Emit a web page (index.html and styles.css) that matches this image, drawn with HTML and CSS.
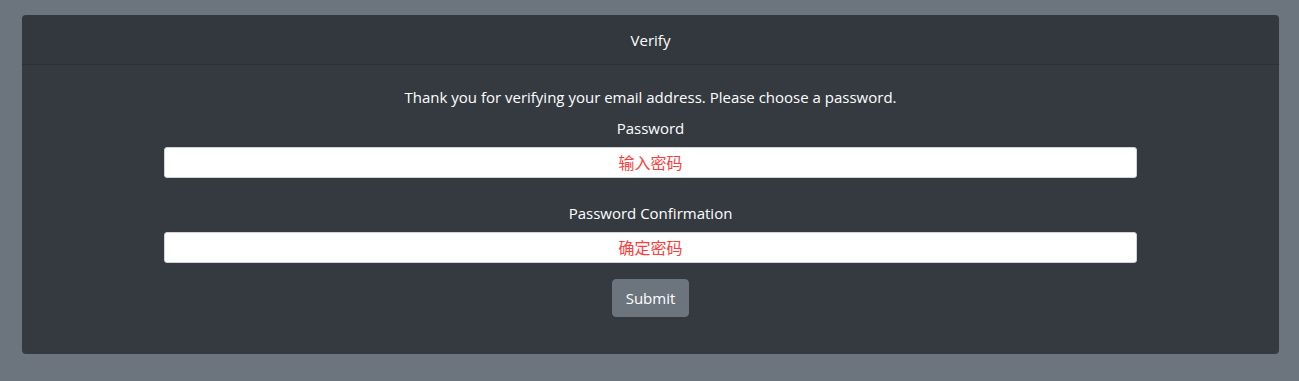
FILE: index.html
```html
<!DOCTYPE html>
<html lang="en">
<head>
<meta charset="utf-8">
<title>Verify</title>
<link rel="stylesheet" href="styles.css">
</head>
<body>
<div class="card">
  <div class="card-header">Verify</div>
  <form class="card-body">
    <p class="intro">Thank you for verifying your email address. Please choose a password.</p>
    <div class="form-group">
      <label class="label" for="pw">Password</label>
      <input class="input" id="pw" type="password" placeholder="输入密码">
    </div>
    <div class="form-group">
      <label class="label" for="pwc">Password Confirmation</label>
      <input class="input" id="pwc" type="password" placeholder="确定密码">
    </div>
    <button class="btn" type="button">Submit</button>
  </form>
</div>
</body>
</html>
```
FILE: styles.css
```css
html, body {
  margin: 0;
  background: #6c757d;
}
body {
  padding: 15px 20px 27px 22px;
  font-family: "Open Sans", "Noto Sans", "Noto Sans CJK SC", sans-serif;
  font-size: 15px;
  line-height: 24px;
  color: #fff;
}
.card {
  background: #343a40;
  border-radius: 4px;
  overflow: hidden;
}
.card-header {
  text-align: center;
  padding: 13px 20px 12px;
  height: 24px;
  border-bottom: 1px solid rgba(0,0,0,0.125);
  background: rgba(0,0,0,0.03);
}
.card-body {
  padding: 20px 20px 37px;
  display: flex;
  flex-direction: column;
  align-items: center;
}
.intro {
  margin: 0 0 7px;
}
.form-group {
  width: 80%;
  display: flex;
  flex-direction: column;
  align-items: center;
  margin-bottom: 23px;
}
.form-group:last-of-type {
  margin-bottom: 16px;
}
.label {
  margin-bottom: 7px;
}
.input {
  box-sizing: border-box;
  width: 100%;
  height: 31px;
  border: 1px solid #ced4da;
  border-radius: 3px;
  background: #fff;
  text-align: center;
  font: inherit;
  font-size: 16px;
  padding: 0 8px;
}
.input::placeholder {
  color: #ff3b3b;
  font-family: "Noto Sans CJK SC", sans-serif;
  opacity: 1;
}
.btn {
  height: 38px;
  padding: 0 13px;
  background: #6c757d;
  border: 1px solid #6c757d;
  border-radius: 4px;
  color: #fff;
  font: inherit;
}
```
